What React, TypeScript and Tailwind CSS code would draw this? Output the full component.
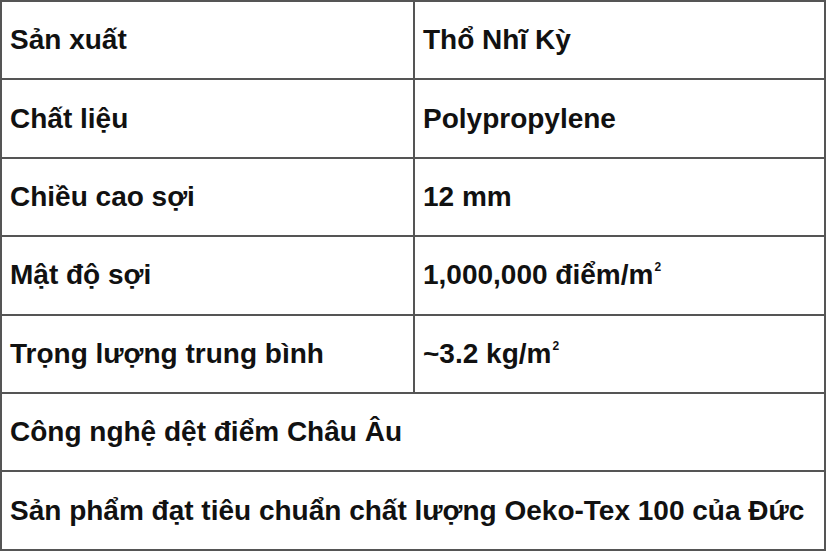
const rows: [string, React.ReactNode | null][] = [
  ["Sản xuất", "Thổ Nhĩ Kỳ"],
  ["Chất liệu", "Polypropylene"],
  ["Chiều cao sợi", "12 mm"],
  [
    "Mật độ sợi",
    <>
      1,000,000 điểm/m<sup className="text-[12px] relative -top-[13px] ml-[1px]">2</sup>
    </>,
  ],
  [
    "Trọng lượng trung bình",
    <>
      ~3.2 kg/m<sup className="text-[12px] relative -top-[13px] ml-[1px]">2</sup>
    </>,
  ],
  ["Công nghệ dệt điểm Châu Âu", null],
  ["Sản phẩm đạt tiêu chuẩn chất lượng Oeko-Tex 100 của Đức", null],
];

export default function App() {
  return (
    <div className="w-[827px] h-[551px] bg-white font-['Liberation_Sans',Arial,sans-serif] font-bold text-[28px] text-[#111]">
      <table className="w-[826px] border-collapse">
        <tbody>
          {rows.map(([label, value], i) => (
            <tr key={i} className="h-[78.4px]">
              {value === null ? (
                <td colSpan={2} className="border-2 border-[#555] pl-2 align-middle whitespace-nowrap">
                  {label}
                </td>
              ) : (
                <>
                  <td className="w-[413px] border-2 border-[#555] pl-2 align-middle">{label}</td>
                  <td className="border-2 border-[#555] pl-2 align-middle">{value}</td>
                </>
              )}
            </tr>
          ))}
        </tbody>
      </table>
    </div>
  );
}
